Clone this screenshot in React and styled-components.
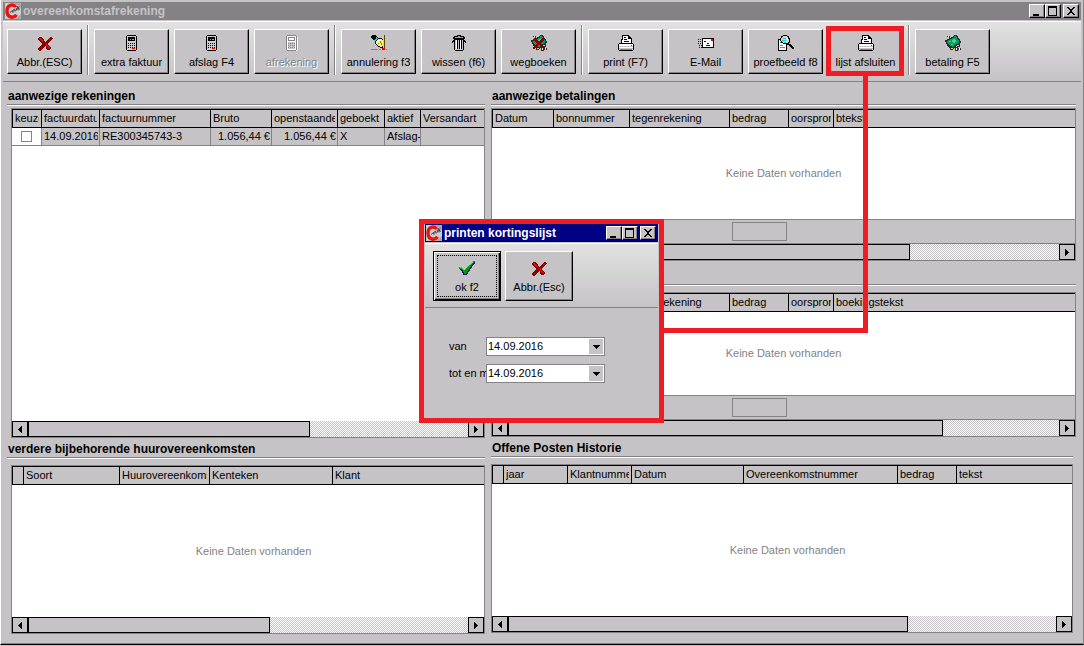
import React from 'react';
import styled, { createGlobalStyle, css } from 'styled-components';

const face = '#c6c3c6';
const shade = '#848284';
const red = '#ef1c24';

const invoiceColumns = [
  { label: 'keuze', width: 29 },
  { label: 'factuurdatum', width: 58 },
  { label: 'factuurnummer', width: 111 },
  { label: 'Bruto', width: 61 },
  { label: 'openstaande', width: 66 },
  { label: 'geboekt', width: 47 },
  { label: 'aktief', width: 36 },
  { label: 'Versandart' },
];

const paymentColumns = (last) => [
  { label: 'Datum', width: 61 },
  { label: 'bonnummer', width: 76 },
  { label: 'tegenrekening', width: 100 },
  { label: 'bedrag', width: 59 },
  { label: 'oorsprong', width: 45 },
  { label: last },
];

const contractColumns = [
  { label: '', width: 11 },
  { label: 'Soort', width: 96 },
  { label: 'Huurovereenkomst', width: 90 },
  { label: 'Kenteken', width: 123 },
  { label: 'Klant' },
];

const historyColumns = [
  { label: '', width: 11 },
  { label: 'jaar', width: 64 },
  { label: 'Klantnummer', width: 64 },
  { label: 'Datum', width: 112 },
  { label: 'Overeenkomstnummer', width: 154 },
  { label: 'bedrag', width: 59 },
  { label: 'tekst' },
];

/* ---------- icons ---------- */

const Svg = ({ w = 16, h = 16, children }) => (
  <svg
    width={w}
    height={h}
    viewBox={`0 0 ${w} ${h}`}
    shapeRendering="crispEdges"
    aria-hidden="true"
  >
    {children}
  </svg>
);

const LogoIcon = () => (
  <svg width="16" height="16" viewBox="0 0 16 16" aria-hidden="true">
    <rect width="16" height="16" fill="#cfcdcf" />
    <path d="M9 0h7v5zM10 16l6-5v5z" fill="#aaa8aa" />
    <path
      d="M10.500 4.200C9.500 1 2 .8 2 8s7 7.500 9.500 3.800"
      fill="none"
      stroke="#ee1111"
      strokeWidth="3.400"
    />
    <path
      d="M5 9.500l2.500-2 .4 2 .2-2.500 1.600-1 .2 2.200 1.800-1.200-.6-1.500 1.600-.6.4 2.500M12.500 3l1.400 3.500 1.200-.8M12 5l2.600-1.200"
      fill="none"
      stroke="#3a3a3a"
      strokeWidth=".9"
    />
  </svg>
);

const CrossIcon = () => (
  <Svg>
    <path
      d="M2 2h3v1h1v1h1v2h1v1h1V6h1V5h1V4h1V3h1V2h2v1h1v1h-1v1h-1v1h-1v1h-1v1h-1v2h1v1h1v1h1v2h-1v1h-3v-1h-1v-1H9v-2H8v1H7v1H6v1H5v1H4v1H2v-1H1v-2h1v-1h1v-1h1v-1h1V8H4V7H3V6H2V5H1V3h1z"
      fill="#8c0000"
    />
    <path d="M2 3h2v1h1v1h1v2H5V6H4V5H3V4H2zM9 8h1v2h1v1h1v1h1v1h-2v-1h-1v-1H9zM12 4h1v1h-1z" fill="#ce1818" />
  </Svg>
);

const CheckIcon = () => (
  <Svg>
    <path d="M14 1h2v3h-1v1h-1v1h-1v2h-1v1h-1v2h-1v1H9v2H8v1H4v-2H3v-2H2v-1H1V9H0V7h3v1h1v1h1v1h1V9h1V8h1V7h1V6h1V5h1V4h1V3h1V2h1z" fill="#14147b" />
    <path d="M14 1h2v1h-1v1h-1v1h-1v1h-1v2h-1v1h-1v2H9v1H8v2H7v1H5v-2H4v-2H3v-1H2V9H0V7h3v1h1v1h1v1h1V9h1V8h1V7h1V6h1V5h1V4h1V3h1V2h1z" fill="#00a200" />
    <path d="M1 7h2v1h1v1h1v1H4V9H3V8H1zM13 2h1v1h-1v1h-1v1h-1V4h1V3h1z" fill="#4ae04a" />
  </Svg>
);

const CalculatorIcon = ({ off }) => (
  <Svg w={12}>
    {off && <path d="M2 1h9v1h1v13h-1v1H2z" fill="#fff" />}
    <path d="M1 0h9v1h1v14h-1v1H1v-1H0V1h1z" fill={off ? shade : '#000'} />
    <path d="M1 1h9v14H1z" fill={off ? '#fff' : '#ceccce'} />
    <path d="M2 2h7v4H2z" fill={off ? shade : '#000'} />
    {off ? (
      <path d="M3 3h5v2H3z" fill="#fff" />
    ) : (
      <path d="M4 4h1v1H4zM6 4h2v1H6z" fill="#00dcdc" />
    )}
    {off && <path d="M2 7h7v7H2z" fill={face} />}
    {[8, 10, 12].map((y) =>
      [2, 4, 6, 8].map((x) => (
        <rect key={`${x}-${y}`} x={x} y={y} width="1" height="1" fill={off ? shade : '#000'} />
      ))
    )}
    {!off && <path d="M6 13h3v1H6z" fill="#f00" />}
  </Svg>
);

const EraseIcon = () => (
  <Svg>
    <path d="M1 0h4v1h1v1h1v1H6v1H5v1H4v1H3V5H2V4H1V3H0V1h1z" fill="#000" />
    <path d="M5 2h1v1h1v1H6v1H5v1H3V5h1V4h1z" fill="#00e0e0" />
    <path d="M7 3h4v1h1v1h1v7h-1v1H9v-1H7v-1H6v-1H5V9H4V6h1V5h1V4h1z" fill="#000" />
    <path d="M7 4h4v1h1v6h-1v1H9v-1H7v-1H6V9H5V6h1V5h1z" fill="#fff27b" />
    <path d="M9 6h1v2H9zM10 8h1v2h-1zM7 8h1v1H7z" fill="#9c7b00" />
    <path d="M7 5h2v1H7zM6 7h1v1H6z" fill="#fff" />
    <path d="M13 0h1v13h-1z" fill="#5a4a00" />
    <path d="M12 1h1v12h-1z" fill="#ffd800" />
    <path d="M0 14h7v1H0zM8 14h2v1H8zM15 14h1v1h-1z" fill={shade} />
    <path d="M11 13h3v2h-3z" fill="#f00000" />
  </Svg>
);

const TrashIcon = () => (
  <Svg>
    <path d="M6 0h4v1h3v1h1v2h-1v1h1v1h1v2h-1V7h-1v8h-1v1H4v-1H3V7H2v1H1V6h1V5h1V4H2V2h1V1h3z" fill="#000" />
    <path d="M7 1h2v1H7zM4 2h8v1H4z" fill="#a5a2a5" />
    <path d="M4 5h8v10H4z" fill="#c6c3c6" />
    <path d="M5 5h1v9H5zM9 5h1v9H9z" fill="#fff" />
    <path d="M6 5h1v9H6zM8 5h1v9H8zM10 5h1v9h-1zM4 4h8v1H4z" fill="#000" />
  </Svg>
);

const MoneyIcon = ({ crossed }) => (
  <Svg>
    <path d="M9 0h3v1h1v2h1v1h1v2h1v2h-1v2h-2v1h-2v2H9v1H6v-1H4v-1H3v-1H2V9H1V7H0V5h2V4h2V3h2V2h2V1h1z" fill="#15362c" />
    <path d="M9 1h2v1h1v2h1v1h1v3h-1v1h-2v1H9v2H7v-1H5v-1H4V9H3V8H2V6h1V5h2V4h2V3h2z" fill="#0b9a63" />
    <path d="M8 4h2v1h1v2h-1v1H8V7H7V5h1zM4 6h2v1H4zM6 9h2v1H6z" fill="#45d68b" />
    <path d="M2 1h3v3H2zM12 9h3v3h-3zM10 12h3v4h-3zM5 13h3v2H5zM13 13h3v2h-3z" fill="#303030" />
    <path d="M2 2h2v2H2zM12 10h2v1h-2zM6 13h2v1H6z" fill="#d6cf43" />
    <path d="M11 13h1v2h-1zM14 13h1v2h-1zM3 1h1v1H3z" fill="#fff" />
    {crossed && (
      <path
        d="M3 3h2v1h1v1h1v1h2V5h1V4h1V3h2v1h1v1h-1v1h-1v1h-1v1h-1v1h1v1h1v1h1v1h1v2h-2v-1h-1v-1h-1v-1H9v-1H7v1H6v1H5v1H4v1H2v-2h1v-1h1v-1h1V9h1V8H5V7H4V6H3z"
        fill="#8c0000"
      />
    )}
  </Svg>
);

const PrinterIcon = () => (
  <Svg>
    <path d="M4 0h7v1h1v1h1v1h1v6H3V4h1z" fill="#000" />
    <path d="M5 1h5v3h3v5H4V5h1z" fill="#fff" />
    <path d="M6 2h2v1H6zM6 4h3v1H6zM6 6h5v1H6z" fill="#000" />
    <path d="M1 8h14v1h1v6h-1v1H1v-1H0V9h1z" fill="#000" />
    <path d="M1 9h14v2H1z" fill="#fff" />
    <path d="M1 11h14v1H1zM1 13h14v2H1z" fill="#c6c3c6" />
    <path d="M1 12h14v1H1z" fill="#fff" />
    <path d="M2 14h12v1H2z" fill={shade} />
    <path d="M13 10h1v1h-1z" fill="#f00" />
  </Svg>
);

const MailIcon = () => (
  <Svg>
    <path d="M4 3h12v10H4z" fill="#000" />
    <path d="M5 4h10v8H5z" fill="#fff" />
    <path d="M13 4h2v2h-2z" fill="#f00000" />
    <path d="M6 6h2v1H6zM9 8h2v1H9zM8 10h4v1H8zM0 4h1v1H0zM2 4h1v1H2zM0 6h1v1H0zM2 6h1v1H2zM0 8h1v1H0zM2 8h1v1H2zM1 10h1v1H1zM3 10h1v1H3zM1 12h1v1H1zM3 12h1v1H3z" fill="#0000e6" />
  </Svg>
);

const PreviewIcon = () => (
  <Svg>
    <path d="M0 4h9v12H0z" fill="#000" />
    <path d="M1 5h7v10H1z" fill="#fff" />
    <path d="M2 7h2v1H2zM2 10h3v1H2zM2 12h5v1H2z" fill={shade} />
    <path d="M5 0h4v1h2v2h1v5h-1v1h2v1h1v1h1v1h1v2h-2v-1h-1v-1h-1v-1h-1v-1H9V9H5V8H3V6H2V3h1V1h2z" fill="#000" />
    <path d="M5 1h4v1h1v2h1v3h-1v1H5V7H4V6H3V3h1V2h1z" fill="#d6d3d6" />
    <path d="M5 3h3v1H5zM4 5h4v1H4zM6 7h2v1H6z" fill="#00dcdc" />
    <path d="M8 2h1v1h1v2H9V3H8z" fill="#fff" />
  </Svg>
);

const captionPaths = {
  minimaliseren: 'M3 9h6v2H3z',
  maximaliseren: 'M2 1h9v10H2zM3 3v7h7V3z',
  sluiten: 'M3 2h2v1h1v1h2V3h1V2h2v1h-1v1H9v1H8v2h1v1h1v1h1v1H9V9H8V8H6v1H5v1H3V9h1V8h1V7h1V5H5V4H4V3H3z',
};

/* ---------- parts ---------- */

const CaptionBar = ({ title, active }) => (
  <TitleBar $active={active}>
    <LogoIcon />
    <WindowTitle>{title}</WindowTitle>
    {Object.keys(captionPaths).map((name) => (
      <CaptionButton key={name} type="button" aria-label={name} $apart={name === 'sluiten'}>
        <Svg w={13} h={12}>
          <path d={captionPaths[name]} fillRule="evenodd" />
        </Svg>
      </CaptionButton>
    ))}
  </TitleBar>
);

const Scroller = ({ size }) => (
  <ScrollBar>
    <ScrollButton type="button" aria-label="naar links">
      <Svg w={4} h={7}>
        <path d="M3 0h1v7H3V6H2V5H1V4H0V3h1V2h1V1h1z" />
      </Svg>
    </ScrollButton>
    <ScrollTrack>
      <ScrollThumb $size={size} />
    </ScrollTrack>
    <ScrollButton type="button" aria-label="naar rechts">
      <Svg w={4} h={7}>
        <path d="M0 0h1v1h1v1h1v1h1v1H3v1H2v1H1v1H0z" />
      </Svg>
    </ScrollButton>
  </ScrollBar>
);

const DataPanel = ({ title, columns, grow, thumb, children, first, summary, narrow, inset }) => (
  <Panel $grow={grow}>
    <PanelTitle $tall={!title}>{title}</PanelTitle>
    <Rule $narrow={narrow} />
    <Frame $first={first} $narrow={narrow} $inset={inset}>
      <Grid>
        <colgroup>
          {columns.map((col, i) => (
            <Col key={i} $width={col.width} />
          ))}
        </colgroup>
        <thead>
          <tr>
            {columns.map((col, i) => (
              <HeadCell key={i}>
                <Clip>{col.label}</Clip>
              </HeadCell>
            ))}
          </tr>
        </thead>
        {children && <tbody>{children}</tbody>}
      </Grid>
      <Body $indent={!columns[0].label}>{!children && 'Keine Daten vorhanden'}</Body>
      {summary && (
        <SummaryBar>
          <SummaryField />
        </SummaryBar>
      )}
      <Scroller size={thumb} />
    </Frame>
  </Panel>
);

const Tool = ({ icon, label, disabled }) => (
  <ToolButton type="button" disabled={disabled}>
    {icon}
    <span>{label}</span>
  </ToolButton>
);

const DateField = ({ id, label }) => (
  <FieldRow>
    <FieldLabel htmlFor={id}>{label}</FieldLabel>
    <SelectWrap>
      <DateSelect id={id} defaultValue="14.09.2016">
        <option>14.09.2016</option>
      </DateSelect>
      <DropMark>
        <Svg w={7} h={4}>
          <path d="M0 0h7v1H6v1H5v1H4v1H3V3H2V2H1V1H0z" />
        </Svg>
      </DropMark>
    </SelectWrap>
  </FieldRow>
);

const App = () => (
  <>
    <GlobalStyle />
    <Screen>
      <Window>
        <CaptionBar title="overeenkomstafrekening" />
        <Toolbar>
          <ToolGroup>
            <Tool icon={<CrossIcon />} label="Abbr.(ESC)" />
          </ToolGroup>
          <ToolGroup>
            <Tool icon={<CalculatorIcon />} label="extra faktuur" />
            <Tool icon={<CalculatorIcon />} label="afslag F4" />
            <Tool icon={<CalculatorIcon off />} label="afrekening" disabled />
          </ToolGroup>
          <ToolGroup>
            <Tool icon={<EraseIcon />} label="annulering f3" />
            <Tool icon={<TrashIcon />} label="wissen (f6)" />
            <Tool icon={<MoneyIcon crossed />} label="wegboeken" />
          </ToolGroup>
          <ToolGroup>
            <Tool icon={<PrinterIcon />} label="print (F7)" />
            <Tool icon={<MailIcon />} label="E-Mail" />
            <Tool icon={<PreviewIcon />} label="proefbeeld f8" />
            <Highlight>
              <Tool icon={<PrinterIcon />} label="lijst afsluiten" />
            </Highlight>
          </ToolGroup>
          <ToolGroup>
            <Tool icon={<MoneyIcon />} label="betaling F5" />
          </ToolGroup>
        </Toolbar>

        <Content>
          <Column>
            <DataPanel
              title="aanwezige rekeningen"
              columns={invoiceColumns}
              grow={353}
              thumb={64}
              first
              inset
            >
              <tr>
                <CheckCell>
                  <CheckBox type="checkbox" aria-label="keuze" />
                </CheckCell>
                <Cell>
                  <Clip>14.09.2016</Clip>
                </Cell>
                <Cell>RE300345743-3</Cell>
                <Cell $right>1.056,44 €</Cell>
                <Cell $right>1.056,44 €</Cell>
                <Cell>X</Cell>
                <Cell>Afslag-</Cell>
                <Cell />
              </tr>
            </DataPanel>
            <DataPanel
              title="verdere bijbehorende huurovereenkomsten"
              columns={contractColumns}
              grow={196}
              thumb={55}
              inset
            />
          </Column>
          <Column $raised>
            <DataPanel
              title="aanwezige betalingen"
              columns={paymentColumns('btekst')}
              grow={176}
              thumb={73}
              first
              summary
            />
            <DataPanel
              columns={paymentColumns('boekingstekst')}
              grow={176}
              thumb={79}
              summary
            />
            <DataPanel
              title="Offene Posten Historie"
              columns={historyColumns}
              grow={196}
              thumb={73}
              narrow
            />
          </Column>
        </Content>

        <Connector />
        <Dialog role="dialog" aria-label="printen kortingslijst">
          <CaptionBar title="printen kortingslijst" active />
          <DialogTools>
            <DialogButton type="button" $default>
              <CheckIcon />
              <span>ok f2</span>
            </DialogButton>
            <DialogButton type="button">
              <CrossIcon />
              <span>Abbr.(Esc)</span>
            </DialogButton>
          </DialogTools>
          <Fields>
            <DateField id="van" label="van" />
            <DateField id="tot" label="tot en met" />
          </Fields>
        </Dialog>
      </Window>
    </Screen>
  </>
);

/* ---------- styles ---------- */

const GlobalStyle = createGlobalStyle`
  * {
    box-sizing: border-box;
  }

  body {
    margin: 0;
    background: ${face};
    color: #000;
    font-family: 'Liberation Sans', Arial, sans-serif;
    font-size: 11px;
    line-height: 13px;
  }

  button, input, select {
    font: inherit;
    color: inherit;
    border-radius: 0;
  }

  svg {
    display: block;
    flex: none;
  }
`;

const Screen = styled.div`
  min-height: 100vh;
  display: flex;
  padding-bottom: 1px;
`;

const Window = styled.main`
  position: relative;
  flex: 1;
  min-width: 0;
  display: flex;
  flex-direction: column;
  padding-top: 2px;
  background: ${face};
  border-left: 1px solid #fff;
  border-right: 1px solid ${shade};
  border-bottom: 1px solid #000;
  box-shadow: inset 0 -1px 0 ${shade};
`;

const TitleBar = styled.header`
  display: flex;
  align-items: center;
  height: 18px;
  margin: 0 2px;
  padding: 0 2px;
  background: ${({ $active }) => ($active ? '#000084' : shade)};
  color: ${({ $active }) => ($active ? '#fff' : face)};
`;

const WindowTitle = styled.h1`
  flex: 1;
  margin: 0;
  padding-left: 2px;
  font-size: 12px;
  line-height: 14px;
  font-weight: bold;
`;

const CaptionButton = styled.button`
  width: 16px;
  height: 14px;
  margin-left: ${({ $apart }) => ($apart ? '2px' : '0')};
  padding: 0;
  color: #000;
  background: ${face};
  border: 1px solid;
  border-color: #fff #000 #000 #fff;
  box-shadow: inset -1px -1px 0 ${shade};
`;

const toolbarFill = css`
  background: linear-gradient(#e2e2e2, ${face});
  border-top: 1px solid #fff;
  border-bottom: 1px solid ${shade};
`;

const Toolbar = styled.div`
  ${toolbarFill}
  display: flex;
  height: 61px;
  margin: 1px 2px 0;
  padding: 3px 4px;
`;

const ToolGroup = styled.div`
  display: flex;
  gap: 5px;
  height: 50px;
  padding-top: 4px;

  & + & {
    margin-left: 5px;
    padding-left: 5px;
    border-left: 1px solid ${shade};
    box-shadow: inset 1px 0 0 #fff;
  }

  & + & > :first-child {
    margin-left: 1px;
  }
`;

const buttonFace = css`
  display: flex;
  flex-direction: column;
  align-items: center;
  background: ${face};
  border: 1px solid;
  border-color: #fff #000 #000 #fff;
  box-shadow: inset -1px -1px 0 ${shade};
  white-space: nowrap;

  svg {
    margin-bottom: 5px;
  }
`;

const ToolButton = styled.button`
  ${buttonFace}
  width: 75px;
  height: 45px;
  padding: 5px 0 0;

  &:disabled {
    color: ${shade};
    text-shadow: 1px 1px 0 #fff;
  }
`;

const Highlight = styled.div`
  position: relative;
  height: 45px;

  &::after {
    content: '';
    position: absolute;
    inset: -3px -1px -2px -2px;
    border: 5px solid ${red};
    pointer-events: none;
  }
`;

const Content = styled.div`
  flex: 1;
  display: grid;
  grid-template-columns: 478fr 585fr;
  gap: 6px;
  padding: 3px 7px 10px 6px;
`;

const Column = styled.div`
  display: flex;
  flex-direction: column;
  min-width: 0;
  padding-bottom: ${({ $raised }) => ($raised ? '1px' : '0')};
`;

const Panel = styled.section`
  flex: ${({ $grow }) => $grow} 0 0;
  display: flex;
  flex-direction: column;
  min-height: 120px;
`;

const PanelTitle = styled.h2`
  height: ${({ $tall }) => ($tall ? '23px' : '19px')};
  margin: 0;
  padding-left: 1px;
  font-size: 12px;
  line-height: 22px;
  font-weight: bold;
`;

const Rule = styled.div`
  height: 2px;
  margin-right: ${({ $narrow }) => ($narrow ? '3px' : '0')};
  border-top: 1px solid ${shade};
  border-bottom: 1px solid #fff;
`;

const Frame = styled.div`
  flex: 1;
  display: flex;
  flex-direction: column;
  margin-top: ${({ $first }) => ($first ? '2px' : '6px')};
  margin-right: ${({ $narrow }) => ($narrow ? '3px' : '0')};
  margin-left: ${({ $inset }) => ($inset ? '4px' : '0')};
  background: #fff;
  border: 1px solid ${shade};
`;

const Grid = styled.table`
  width: 100%;
  table-layout: fixed;
  border-collapse: separate;
  border-spacing: 0;
`;

const Col = styled.col`
  width: ${({ $width }) => ($width ? `${$width}px` : 'auto')};
`;

const HeadCell = styled.th`
  height: 19px;
  padding: 0 2px;
  background: ${face};
  border: solid #000;
  border-width: 1px 0 1px 1px;
  font-weight: normal;
  text-align: left;
`;

const Clip = styled.span`
  display: block;
  overflow: hidden;
  white-space: nowrap;
`;

const Cell = styled.td`
  height: 18px;
  padding: 0 1px 0 2px;
  overflow: hidden;
  background: ${face};
  border: solid ${shade};
  border-width: 0 0 1px 1px;
  text-align: ${({ $right }) => ($right ? 'right' : 'left')};
  white-space: nowrap;
`;

const CheckCell = styled(Cell)`
  padding: 0;
  background: #fff;
  border-left: 0;
  text-align: center;
`;

const CheckBox = styled.input`
  appearance: none;
  display: block;
  width: 11px;
  height: 11px;
  margin: 0 auto;
  background: #fff;
  border: 1px solid ${shade};
`;

const Body = styled.div`
  flex: 1;
  display: flex;
  align-items: center;
  justify-content: center;
  padding-left: ${({ $indent }) => ($indent ? '11px' : '0')};
  color: ${shade};
`;

const SummaryBar = styled.div`
  height: 25px;
  padding: 2px 0 0 240px;
  background: ${face};
  border: solid ${shade};
  border-width: 1px 0;
`;

const SummaryField = styled.div`
  width: 55px;
  height: 19px;
  border: 1px solid ${shade};
`;

const ScrollBar = styled.div`
  display: flex;
  height: 16px;
`;

const ScrollButton = styled.button`
  display: flex;
  align-items: center;
  justify-content: center;
  width: 16px;
  height: 16px;
  padding: 0;
  background: ${face};
  border: 1px solid #000;
`;

const ScrollTrack = styled.div`
  flex: 1;
  background: repeating-conic-gradient(#fff 0 25%, ${face} 0 50%) 0 0 / 2px 2px;
`;

const ScrollThumb = styled.div`
  width: ${({ $size }) => $size}%;
  height: 16px;
  background: ${face};
  border: 1px solid #000;
`;

/* line from the marked button down to the dialog */
const Connector = styled.div`
  position: absolute;
  top: 76px;
  left: 662px;
  width: 205px;
  height: 257px;
  border: solid ${red};
  border-width: 0 5px 5px 0;
  pointer-events: none;
`;

const Dialog = styled.div`
  position: absolute;
  top: 219px;
  left: 418px;
  width: 245px;
  height: 204px;
  background: ${face};
  border: 5px solid ${red};

  ${TitleBar} {
    margin: 0 1px;
    padding: 0 2px 0 1px;
  }
`;

const DialogTools = styled.div`
  ${toolbarFill}
  display: flex;
  gap: 4px;
  height: 65px;
  margin: 1px 1px 0;
  padding: 7px 8px;
`;

const DialogButton = styled.button`
  ${buttonFace}
  position: relative;
  width: 68px;
  height: 50px;
  padding: 8px 0 0;

  ${({ $default }) =>
    $default &&
    css`
      border-color: #000;
      box-shadow: inset 1px 1px 0 #fff, inset -1px -1px 0 #000, inset -2px -2px 0 ${shade};

      &::after {
        content: '';
        position: absolute;
        inset: 3px;
        border: 1px dotted #000;
      }
    `}
`;

const Fields = styled.div`
  display: flex;
  flex-direction: column;
  gap: 8px;
  padding: 29px 54px 0 25px;
`;

const FieldRow = styled.div`
  display: flex;
  align-items: center;
  height: 19px;
`;

const FieldLabel = styled.label`
  width: 37px;
  overflow: hidden;
  white-space: nowrap;
`;

const SelectWrap = styled.div`
  position: relative;
  flex: 1;
`;

const DateSelect = styled.select`
  appearance: none;
  display: block;
  width: 100%;
  height: 19px;
  padding: 0 16px 0 1px;
  background: #fff;
  border: 1px solid ${shade};
`;

const DropMark = styled.span`
  position: absolute;
  top: 2px;
  right: 2px;
  display: flex;
  align-items: center;
  justify-content: center;
  width: 14px;
  height: 15px;
  background: ${face};
  pointer-events: none;
`;

export default App;
